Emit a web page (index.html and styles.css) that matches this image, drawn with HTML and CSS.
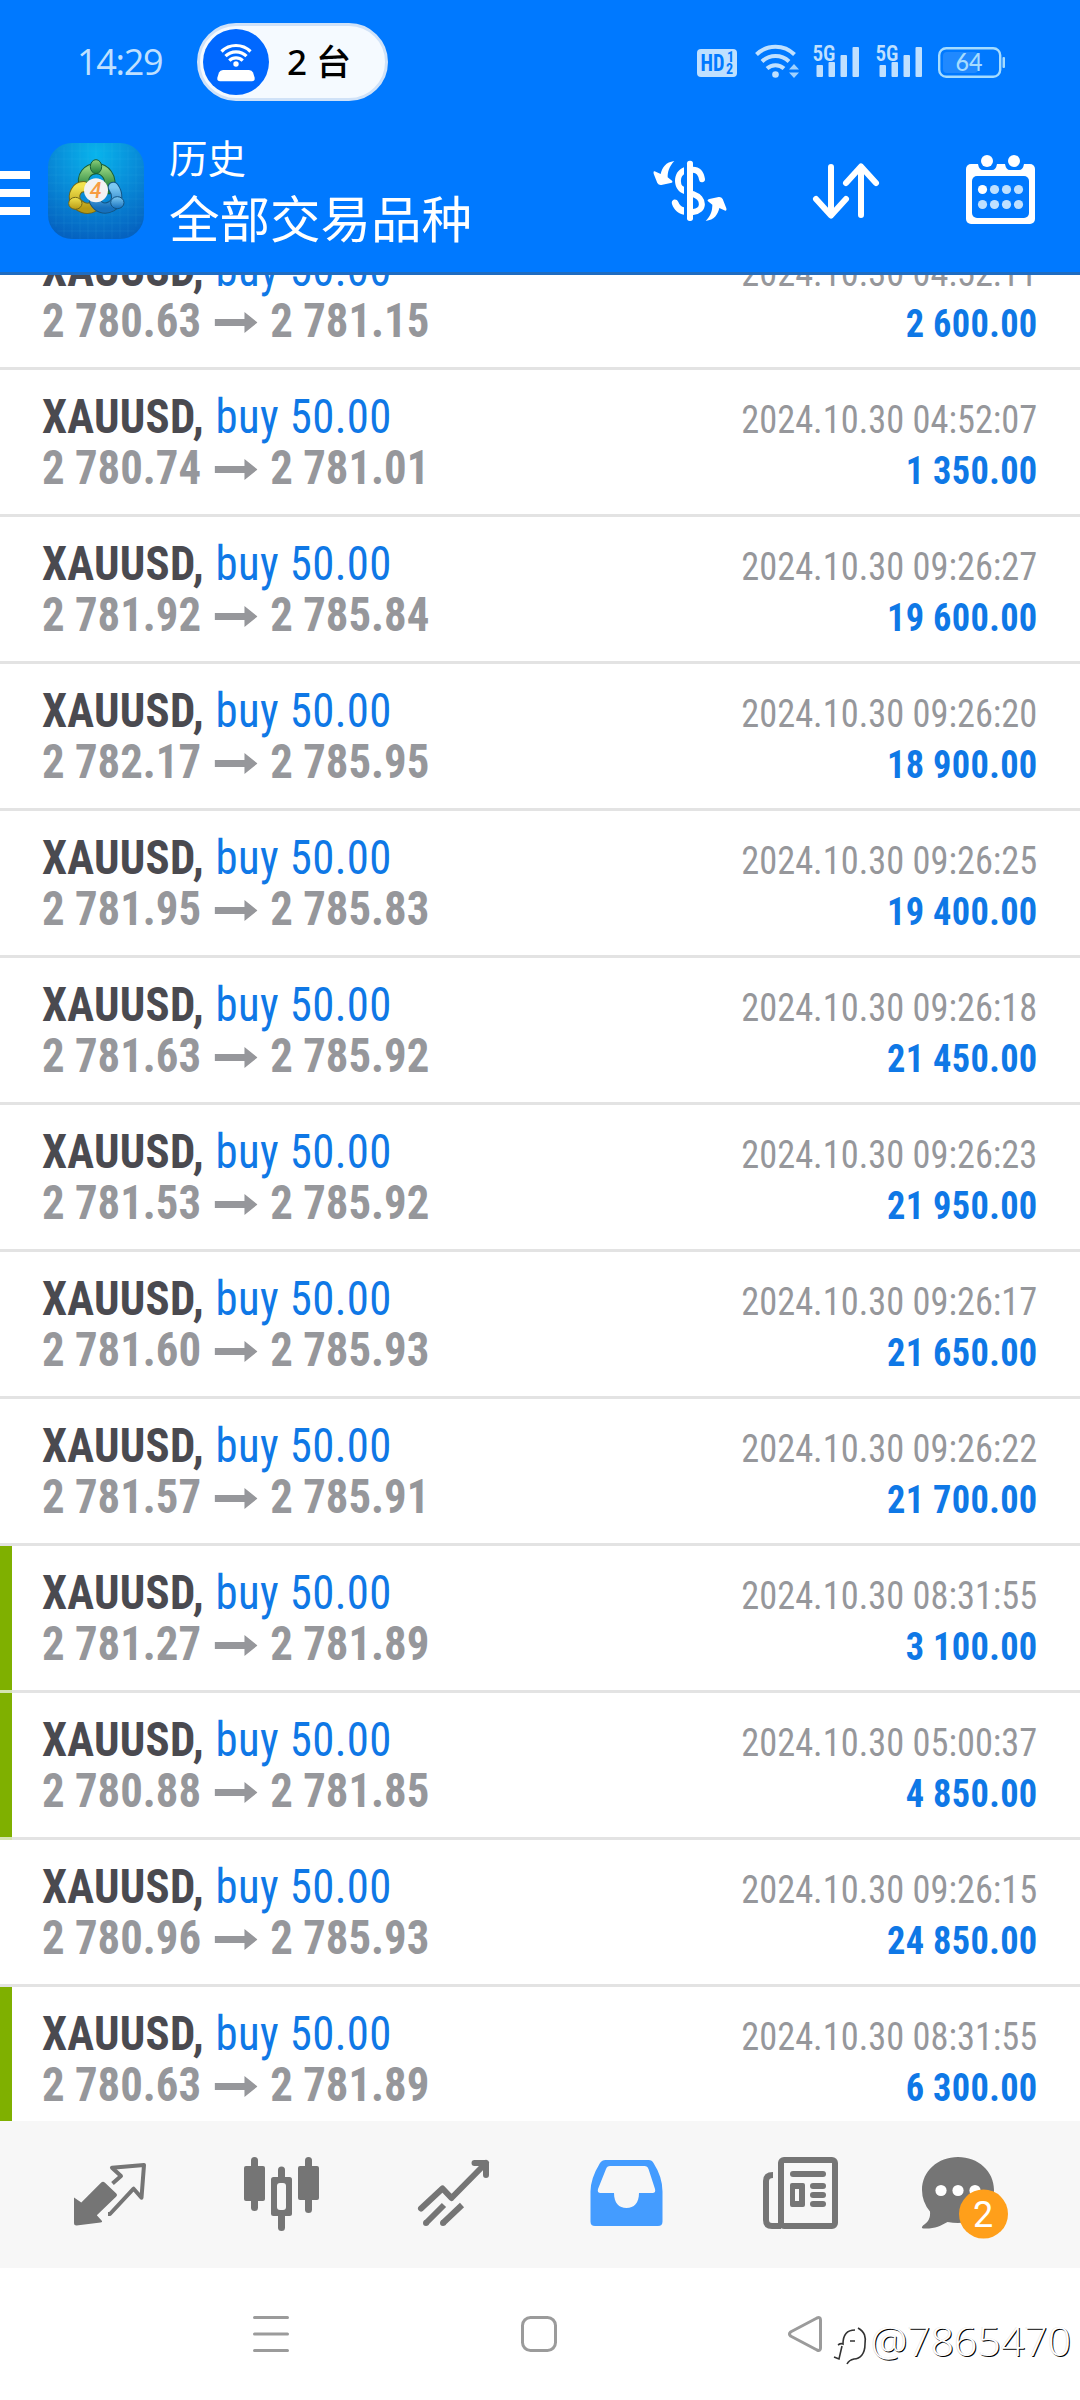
FILE: index.html
```html
<!DOCTYPE html>
<html lang="zh-CN">
<head>
<meta charset="utf-8">
<title>历史</title>
<link rel="stylesheet" href="styles.css">
</head>
<body>
<div class="screen">
  <header class="top">
    <div class="status">
      <span class="clock">14:29</span>
      <div class="pill">
        <svg class="pill-icon" viewBox="203 29 66 66"><circle cx="236" cy="62" r="33" fill="#0068ff"/><g fill="none" stroke="#fff" stroke-width="3.2"><path d="M221.5 51.5a20.5 20.5 0 0 1 29 0"/><path d="M225.5 56.2a14.8 14.8 0 0 1 21 0"/><path d="M229.3 60.6a9.4 9.4 0 0 1 13.4 0"/></g><circle cx="236" cy="64" r="2.7" fill="#fff"/><path d="M223 70h26q3 0 4 2.500l1.600 5q.8 3.800-2.800 3.800h-31.600q-3.600 0-2.800-3.800l1.600-5q1-2.500 4-2.500z" fill="#fff"/></svg>
        <span class="pill-text">2 台</span>
      </div>
      <svg class="status-icons" viewBox="690 40 320 44">
        <rect x="697" y="49" width="40" height="28" rx="4" fill="#bfe0ff"/>
        <g font-family="Roboto Condensed" font-weight="700" fill="#0079ff"><text x="700.500" y="71" font-size="23" textLength="24" lengthAdjust="spacingAndGlyphs">HD</text><text x="727" y="62" font-size="14">1</text><text x="726" y="74" font-size="14">2</text></g>
        <g fill="none" stroke="#bfe0ff" stroke-width="4"><path d="M756.500 54.500a27 27 0 0 1 38 0"/><path d="M762 61.500a19.500 19.500 0 0 1 27 0"/><path d="M767 68.500a12.500 12.500 0 0 1 17 0"/></g>
        <circle cx="775.500" cy="74.500" r="3.300" fill="#bfe0ff"/>
        <path d="M789 69.500l5-5.500 5 5.500zM789 72.500l5 5.500 5-5.500z" fill="#9fd2ff"/>
        <g id="sig" fill="#bfe0ff"><text x="812.500" y="60.500" font-family="Roboto Condensed" font-weight="600" font-size="22" textLength="23" lengthAdjust="spacingAndGlyphs">5G</text><rect x="816.500" y="65" width="6.500" height="12" rx="1"/><rect x="828.500" y="62" width="6.500" height="15" rx="1"/><rect x="840.500" y="55" width="6.500" height="22" rx="1"/><rect x="852.500" y="47" width="6.500" height="30" rx="1"/></g>
        <use href="#sig" x="63"/>
        <rect x="939.200" y="48.200" width="61" height="28.600" rx="7" fill="none" stroke="#a5dcff" stroke-width="2.400"/>
        <rect x="943" y="52" width="35" height="21" rx="4" fill="#2089ff"/>
        <rect x="1002.500" y="57" width="2.500" height="11" rx="1" fill="#a5dcff"/>
        <text x="969" y="71.300" text-anchor="middle" font-family="Lato" font-weight="500" font-size="25" textLength="27" lengthAdjust="spacingAndGlyphs" fill="#a5dcff">64</text>
      </svg>
    </div>
    <div class="appbar">
      <svg class="burger" viewBox="0 171 30 44" fill="#fff"><path d="M0 171h30v8H0zM0 189h30v8H0zM0 207h30v8H0z"/></svg>
      <svg class="logo" viewBox="12 9 288 288">
        <defs>
          <radialGradient id="bg" cx=".5" cy=".12" r=".9"><stop offset="0" stop-color="#08b4ec"/><stop offset=".5" stop-color="#088bd8"/><stop offset="1" stop-color="#0562c0"/></radialGradient>
          <linearGradient id="gr" x1="0" y1="0" x2="0" y2="1"><stop offset="0" stop-color="#8fd07b"/><stop offset="1" stop-color="#1d7c3a"/></linearGradient>
          <linearGradient id="ye" x1="0" y1="0" x2="0" y2="1"><stop offset="0" stop-color="#f1e24e"/><stop offset="1" stop-color="#b79a15"/></linearGradient>
          <linearGradient id="bl" x1="0" y1="0" x2="0" y2="1"><stop offset="0" stop-color="#7cc8f2"/><stop offset="1" stop-color="#1670bd"/></linearGradient>
        </defs>
        <rect x="12" y="9" width="288" height="288" rx="72" fill="url(#bg)"/>
        <path d="M36 40v220M60 20v268M84 10v286M108 9v288M132 9v288M156 9v288M180 9v288M204 9v288M228 10v286M252 20v268M276 40v220M40 33h232M20 57h272M12 81h288M12 105h288M12 129h288M12 153h288M12 177h288M12 201h288M12 225h288M20 249h272M40 273h232" stroke="#6ce0ff" stroke-opacity=".14" stroke-width="1.500"/>
        <g fill="none" stroke-linecap="round">
          <path d="M122 140C110 108 132 86 157 86s50 26 36 60" stroke="#185f37" stroke-width="34"/><path d="M122 140C110 108 132 86 157 86s50 26 36 60" stroke="url(#gr)" stroke-width="28"/>
          <path d="M119 140C98 140 86 164 94 182s34 30 54 18" stroke="#706719" stroke-width="34"/><path d="M119 140C98 140 86 164 94 182s34 30 54 18" stroke="url(#ye)" stroke-width="28"/>
          <path d="M208 142c13 18 16 45-6 57-22 12-40 2-50-15" stroke="#125484" stroke-width="34"/><path d="M208 142c13 18 16 45-6 57-22 12-40 2-50-15" stroke="url(#bl)" stroke-width="28"/>
        </g>
        <ellipse cx="156" cy="80" rx="17" ry="21" fill="url(#gr)" stroke="#185f37" stroke-width="3"/>
        <ellipse cx="94" cy="190" rx="20" ry="18" fill="url(#ye)" stroke="#706719" stroke-width="3"/>
        <ellipse cx="220" cy="188" rx="20" ry="18" fill="url(#bl)" stroke="#125484" stroke-width="3"/>
        <circle cx="156" cy="151" r="36" fill="#f3f2f2"/>
        <text x="155" y="174" text-anchor="middle" font-family="Roboto" font-weight="500" font-style="italic" font-size="64" fill="#f79d43">4</text>
      </svg>
      <div class="titles"><span class="sub">历史</span><span class="main">全部交易品种</span></div>
      <svg class="act-money" viewBox="640 150 100 90"><g transform="translate(640 150) scale(.33333)">
        <rect x="141" y="32" width="18" height="181" rx="8" fill="#fff"/>
        <g fill="none" stroke="#fff" stroke-width="18" stroke-linecap="round"><path d="M159 59c14 0 24 10 27 29"/><path d="M159 132c36 13 35 51 0 54"/></g>
        <path d="M132 52v21q-13 9-8 30 2 6 8 7v22c-36-11-36-68 0-80zM132 194v-22q-12-3-17-16c-5-13-23-8-19 6 6 18 19 29 36 32z" fill="#fff"/>
        <path id="ar" d="M103 33C77 37 67 51 62 72l-18-8q-5-1-3 7l11 28q4 7 12 6l28-6q8-2 4-7l-13-10C83 65 87 50 103 33z" fill="#fff"/>
        <use href="#ar" transform="rotate(180 150 123)"/>
      </g></svg>
      <svg class="act-sort" viewBox="810 160 72 62" fill="none" stroke="#fff" stroke-width="6" stroke-linecap="round" stroke-linejoin="round"><path d="M831 167v48M816 199l15 16.500 15-16.500M861 215v-48M846 183l15-16.500 15 16.500"/></svg>
      <svg class="act-cal" viewBox="964 153 74 74"><rect x="966" y="164" width="69" height="60" rx="5" fill="#fff"/><path d="M978 164h19q-1 6-5 6h-9q-4 0-5-6zM1005 164h19q-1 6-5 6h-9q-4 0-5-6z" fill="#0079ff"/><rect x="972" y="176" width="57" height="42" rx="5" fill="#0079ff"/><g fill="#fff"><circle cx="987" cy="161" r="6"/><circle cx="1014" cy="161" r="6"/><circle cx="982.500" cy="189.500" r="4.600"/></g><g fill="#bfe0ff"><circle cx="994.500" cy="189.500" r="4.600"/><circle cx="1006.500" cy="189.500" r="4.600"/><circle cx="1018.500" cy="189.500" r="4.600"/><circle cx="982.500" cy="204.500" r="4.600"/><circle cx="994.500" cy="204.500" r="4.600"/><circle cx="1006.500" cy="204.500" r="4.600"/><circle cx="1018.500" cy="204.500" r="4.600"/></g></svg>
    </div>
  </header>
  <main class="list" id="list"></main>
  <nav class="tabs">
    <svg viewBox="60 2145 100 100"><path d="M74 2197.500l7.300 5 19.700-19.800q2-2 4 0l11.300 10.700q1.600 1.600 0 3.200l-19.500 18.700 5.200 5.600q.8 1.300-1.500 1.500l-24 3q-2.500 0-2.500-2.500z" fill="#757575"/><path d="M112.500 2183.500l8.500-7.500-9-8.300 32-2.700-2.500 32.700-7.900-9L110 2214h-2" fill="none" stroke="#757575" stroke-width="4" stroke-linejoin="round"/></svg>
    <svg viewBox="232 2145 100 100" fill="#757575"><rect x="251" y="2157" width="7" height="54" rx="3.500"/><rect x="244" y="2166" width="21" height="35" rx="2"/><rect x="305" y="2157" width="7" height="56" rx="3.500"/><rect x="298" y="2166" width="21" height="34" rx="2"/><rect x="278" y="2166.500" width="7" height="64.500" rx="3.500"/><rect x="271" y="2177" width="21" height="39" rx="2.500"/><rect x="277" y="2183" width="9" height="27" rx="3" fill="#f7f7f7"/></svg>
    <svg viewBox="404 2145 100 100" fill="none" stroke="#757575" stroke-width="6" stroke-linecap="round"><path d="M421 2208.500l21.500-20 9 9.500 34.500-35M474.500 2163H486v12" stroke-linejoin="round"/><path d="M426 2223l18-18M443 2223l19-18" stroke-linecap="butt"/><path d="M426 2223h0M443 2223h0"/></svg>
    <svg viewBox="576 2145 100 100"><path fill-rule="evenodd" d="M605.500 2160h43q3.500 0 5 3 9 14 9 28.500v30q0 4.500-4.500 4.500h-63q-4.500 0-4.500-4.500v-30q0-13 9.500-28.500 2-3 5.500-3zM610 2166q-3 0-4 3l-8 20q-1 4 2.500 4H614c0 10 5 15 12.500 15s12.500-5 12.500-15h13.500q3.500 0 2.500-4l-6.500-20q-1-3-4-3z" fill="#449cff"/></svg>
    <svg viewBox="748 2145 100 100"><g fill="none" stroke="#757575" stroke-width="6"><path d="M773 2175q-7 0-7 6v39q0 6 6 6h9"/><rect x="781" y="2160" width="54" height="66" rx="3"/></g><g fill="#757575"><rect x="790" y="2171" width="36" height="6" rx="3"/><rect x="810" y="2183" width="16" height="6" rx="3"/><rect x="810" y="2192" width="16" height="6" rx="3"/><rect x="810" y="2201" width="16" height="6" rx="3"/><path fill-rule="evenodd" d="M792 2183h11q2 0 2 2v20q0 2-2 2h-11q-2 0-2-2v-20q0-2 2-2zM795 2189v12h4v-12z"/></g></svg>
    <svg viewBox="920 2145 100 100"><path d="M958 2157c20 0 36 14 36 33s-16 33-36 33q-5 0-10.500-1c-7 4-13 7-24 6.500q-3-.5-.5-3c6-4 7.500-8 7-14q-8-9.500-8-21.500c0-19 16-33 36-33z" fill="#757575"/><g fill="#fff"><circle cx="941" cy="2190.500" r="5.600"/><circle cx="958" cy="2190.500" r="5.600"/><circle cx="975" cy="2190.500" r="5.600"/></g><circle cx="983.500" cy="2214" r="24.500" fill="#ff9f1a"/><text x="983" y="2226.500" text-anchor="middle" font-family="Roboto" font-size="36" fill="#fff">2</text></svg>
  </nav>
  <footer class="sysnav">
    <svg class="n-menu" viewBox="253 2315 36 38" stroke="#9b9b9b" stroke-width="3" stroke-linecap="round"><path d="M254.500 2317.500h33M254.500 2334h33M254.500 2350.500h33"/></svg>
    <svg class="n-home" viewBox="520 2315 38 38" fill="none" stroke="#9b9b9b" stroke-width="3"><rect x="522.500" y="2317.500" width="33" height="33" rx="8"/></svg>
    <svg class="n-back" viewBox="786 2315 38 38" fill="none" stroke="#9b9b9b" stroke-width="3" stroke-linejoin="round"><path d="M790.500 2332l26.500-14q3.500-1.500 3.500 2v28q0 3.500-3.500 2l-26.500-14q-2-2 0-4z"/></svg>
    <svg class="mark" viewBox="830 2320 40 46" fill="none" stroke-width="1.600"><path d="M834 2357l5 2 3-13M838 2345q3-2 5-1c0-8 3-14 12-14M850 2341h5M858 2328c7 4 8 9 7 16 0 10-5 15-11 15q-5 1-7 5" stroke="#333"/></svg>
    <span class="handle">@7865470</span>
  </footer>
</div>
<script src="list.js"></script>
</body>
</html>
```

FILE: styles.css
```css
* { box-sizing: border-box; }
body { margin: 0; background: #fff; }
svg { display: block; flex: none; }
.screen { width: 1080px; height: 2400px; display: flex; flex-direction: column; overflow: hidden; background: #fff; }

.top { height: 275px; flex: none; background: #0079ff; border-bottom: 3px solid #1f6cc0; position: relative; z-index: 1; }
.status { display: flex; align-items: center; height: 124px; }
.clock { margin-left: 77px; width: 120px; font: 400 36px/50px "Open Sans", sans-serif; letter-spacing: -1.3px; color: #bfe0ff; }
.pill { width: 191px; height: 78px; border: 3px solid #d0e2f8; border-radius: 39px; background: #f5faff; display: flex; align-items: center; padding-left: 3px; }
.pill-icon { width: 66px; height: 66px; }
.pill-text { margin-left: 18px; font: 500 35px/50px "Noto Sans", "Noto Sans CJK SC", sans-serif; color: #000; white-space: nowrap; }
.status-icons { width: 320px; height: 44px; margin-left: 302px; }

.appbar { display: flex; align-items: flex-start; height: 148px; }
.burger { width: 30px; height: 44px; margin-top: 47px; }
.logo { width: 96px; height: 96px; margin: 19px 0 0 18px; }
.titles { margin-left: 25px; width: 471px; display: flex; flex-direction: column; color: #fff; font-family: "Noto Sans CJK SC", sans-serif; }
.sub { margin-top: 6px; font-size: 38.500px; line-height: 52px; }
.main { font-size: 50.500px; line-height: 68px; }
.act-money { width: 100px; height: 90px; margin-top: 26px; }
.act-sort { width: 72px; height: 62px; margin: 36px 0 0 70px; }
.act-cal { width: 74px; height: 74px; margin: 29px 0 0 82px; }

.list { height: 1846px; flex: none; overflow: hidden; font-family: "Roboto Condensed", Roboto, sans-serif; font-stretch: 75%; }
.row { height: 147px; display: flex; justify-content: space-between; align-items: flex-start; padding: 0 43px 0 42px; border-bottom: 3px solid #e3e3e3; }
.row:first-child { margin-top: -52px; }
.row.marked { box-shadow: inset 12px 0 #7fb000; border-image: linear-gradient(90deg, #d5e5b0 12px, #e3e3e3 12px) 0 0 3 0; }
.deal, .result { display: flex; flex-direction: column; white-space: nowrap; padding-top: 21px; }
.deal { transform: scaleX(.933); transform-origin: left; }
.result { transform: scaleX(.933); transform-origin: right; align-items: flex-end; }
.title, .prices { font-size: 48px; line-height: 51px; }
.title { font-weight: 400; letter-spacing: .4px; color: #0f78e6; }
.title b { font-weight: 700; letter-spacing: .25px; margin-right: 1px; color: #4a4a50; }
.prices { display: flex; font-weight: 700; color: #96979b; }
.arrow { width: 46px; height: 21px; margin: 17px 14px 0; }
.time, .profit { font-size: 39px; line-height: 51px; position: relative; top: 4px; }
.time { color: #96979b; }
.profit { font-weight: 700; letter-spacing: .35px; margin-right: -.35px; color: #0f78e6; }

.tabs { height: 147px; flex: none; background: #f7f7f7; display: flex; align-items: center; gap: 72px; padding-left: 60px; }
.tabs svg { width: 100px; height: 100px; }
.sysnav { height: 132px; flex: none; display: flex; align-items: flex-start; }
.n-menu { width: 36px; height: 38px; margin: 47px 0 0 253px; }
.n-home { width: 38px; height: 38px; margin: 47px 0 0 231px; }
.n-back { width: 38px; height: 38px; margin: 47px 0 0 228px; }
.mark { width: 40px; height: 46px; margin: 52px 0 0 6px; }
.handle { margin: 44px 0 0 1px; font: 300 41px/56px "Open Sans", "Noto Sans", sans-serif; color: #fff; text-shadow: 1px 1px 0 #000, -.5px -.5px 0 #ddd; }
```

FILE: list.js
```js
const rows = [
  ["2 780.63", "2 781.15", "2024.10.30 04:52:11", "2 600.00"],
  ["2 780.74", "2 781.01", "2024.10.30 04:52:07", "1 350.00"],
  ["2 781.92", "2 785.84", "2024.10.30 09:26:27", "19 600.00"],
  ["2 782.17", "2 785.95", "2024.10.30 09:26:20", "18 900.00"],
  ["2 781.95", "2 785.83", "2024.10.30 09:26:25", "19 400.00"],
  ["2 781.63", "2 785.92", "2024.10.30 09:26:18", "21 450.00"],
  ["2 781.53", "2 785.92", "2024.10.30 09:26:23", "21 950.00"],
  ["2 781.60", "2 785.93", "2024.10.30 09:26:17", "21 650.00"],
  ["2 781.57", "2 785.91", "2024.10.30 09:26:22", "21 700.00"],
  ["2 781.27", "2 781.89", "2024.10.30 08:31:55", "3 100.00", true],
  ["2 780.88", "2 781.85", "2024.10.30 05:00:37", "4 850.00", true],
  ["2 780.96", "2 785.93", "2024.10.30 09:26:15", "24 850.00"],
  ["2 780.63", "2 781.89", "2024.10.30 08:31:55", "6 300.00", true]
];
document.getElementById("list").innerHTML = rows.map(([open, close, time, profit, marked]) => `
  <div class="row${marked ? " marked" : ""}">
    <div class="deal">
      <div class="title"><b>XAUUSD,</b> buy 50.00</div>
      <div class="prices"><span>${open}</span><svg class="arrow" viewBox="0 0 46 21" fill="#96979b"><path d="M0 7h32V0l14 10.500L32 21v-7H0z"/></svg><span>${close}</span></div>
    </div>
    <div class="result"><span class="time">${time}</span><span class="profit">${profit}</span></div>
  </div>`).join("");
```
